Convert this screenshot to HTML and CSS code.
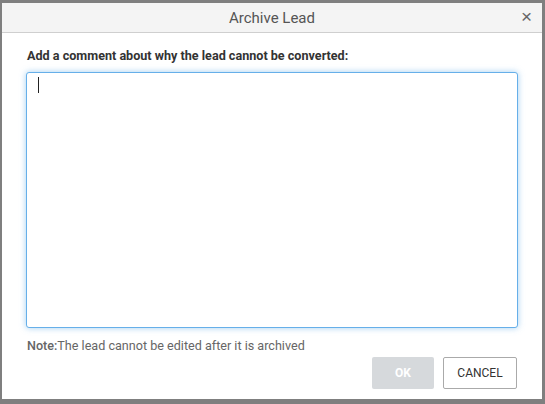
FILE: index.html
```html
<!DOCTYPE html>
<html lang="en">
<head>
  <meta charset="UTF-8">
  <title>Archive Lead</title>
  <link rel="stylesheet" href="styles.css">
</head>
<body>
  <div class="dialog">
    <div class="dialog-header">
      <span class="dialog-title">Archive Lead</span>
      <button class="close-btn">&times;</button>
    </div>
    <div class="dialog-body">
      <label class="comment-label" for="comment">Add a comment about why the lead cannot be converted:</label>
      <div class="comment-wrap">
        <textarea id="comment" class="comment-box"></textarea>
        <span class="caret"></span>
      </div>
      <p class="note"><b>Note:</b>The lead cannot be edited after it is archived</p>
      <div class="actions">
        <button class="btn btn-ok" disabled>OK</button>
        <button class="btn btn-cancel">CANCEL</button>
      </div>
    </div>
  </div>
</body>
</html>
```

FILE: styles.css
```css
html, body {
  margin: 0;
  height: 100%;
}
body {
  background-color: #7f7f7f;
  font-family: Roboto, "Liberation Sans", Arial, sans-serif;
  padding: 3px 3px 5px 2px;
  box-sizing: border-box;
}
.dialog {
  width: 540px;
  height: 396px;
  background-color: #fff;
  display: flex;
  flex-direction: column;
}
.dialog-header {
  height: 29px;
  background-color: #f4f4f4;
  border-bottom: 1px solid #cfcfcf;
  display: flex;
  align-items: center;
  justify-content: center;
  position: relative;
}
.dialog-title {
  font-size: 15px;
  color: #555;
}
.close-btn {
  position: absolute;
  right: 10px;
  top: 5px;
  background: none;
  border: none;
  font-size: 19px;
  line-height: 18px;
  color: #666;
  padding: 0;
  font-family: Arial, sans-serif;
  cursor: pointer;
}
.dialog-body {
  padding: 14px 24px 0 24px;
  display: flex;
  flex-direction: column;
}
.comment-label {
  font-size: 12.6px;
  font-weight: bold;
  color: #333;
  margin: 1px 0 9px 1px;
}
.comment-wrap {
  position: relative;
  height: 256px;
}
.comment-box {
  height: 256px;
  width: 492px;
  box-sizing: border-box;
  border: 1px solid #66afe9;
  border-radius: 3px;
  box-shadow: 0 0 6px rgba(102, 175, 233, 0.6);
  outline: none;
  resize: none;
  padding: 6px 10px;
  font-family: inherit;
  font-size: 13px;
}
.caret {
  position: absolute;
  left: 12px;
  top: 5px;
  width: 1px;
  height: 16px;
  background-color: #222;
}
.note {
  font-size: 12.6px;
  color: #666;
  margin: 10px 0 0 1px;
}
.note b {
  font-weight: 500;
}
.actions {
  display: flex;
  justify-content: flex-end;
  gap: 9px;
  margin-top: 4px;
  margin-right: 1px;
}
.btn {
  height: 32px;
  font-family: inherit;
  font-size: 12px;
  border-radius: 2px;
  cursor: pointer;
}
.btn-ok {
  width: 62px;
  background-color: #d6d9dc;
  color: #fff;
  font-weight: bold;
  border: none;
}
.btn-cancel {
  width: 74px;
  background-color: #fff;
  color: #333;
  border: 1px solid #aaa;
}
```
